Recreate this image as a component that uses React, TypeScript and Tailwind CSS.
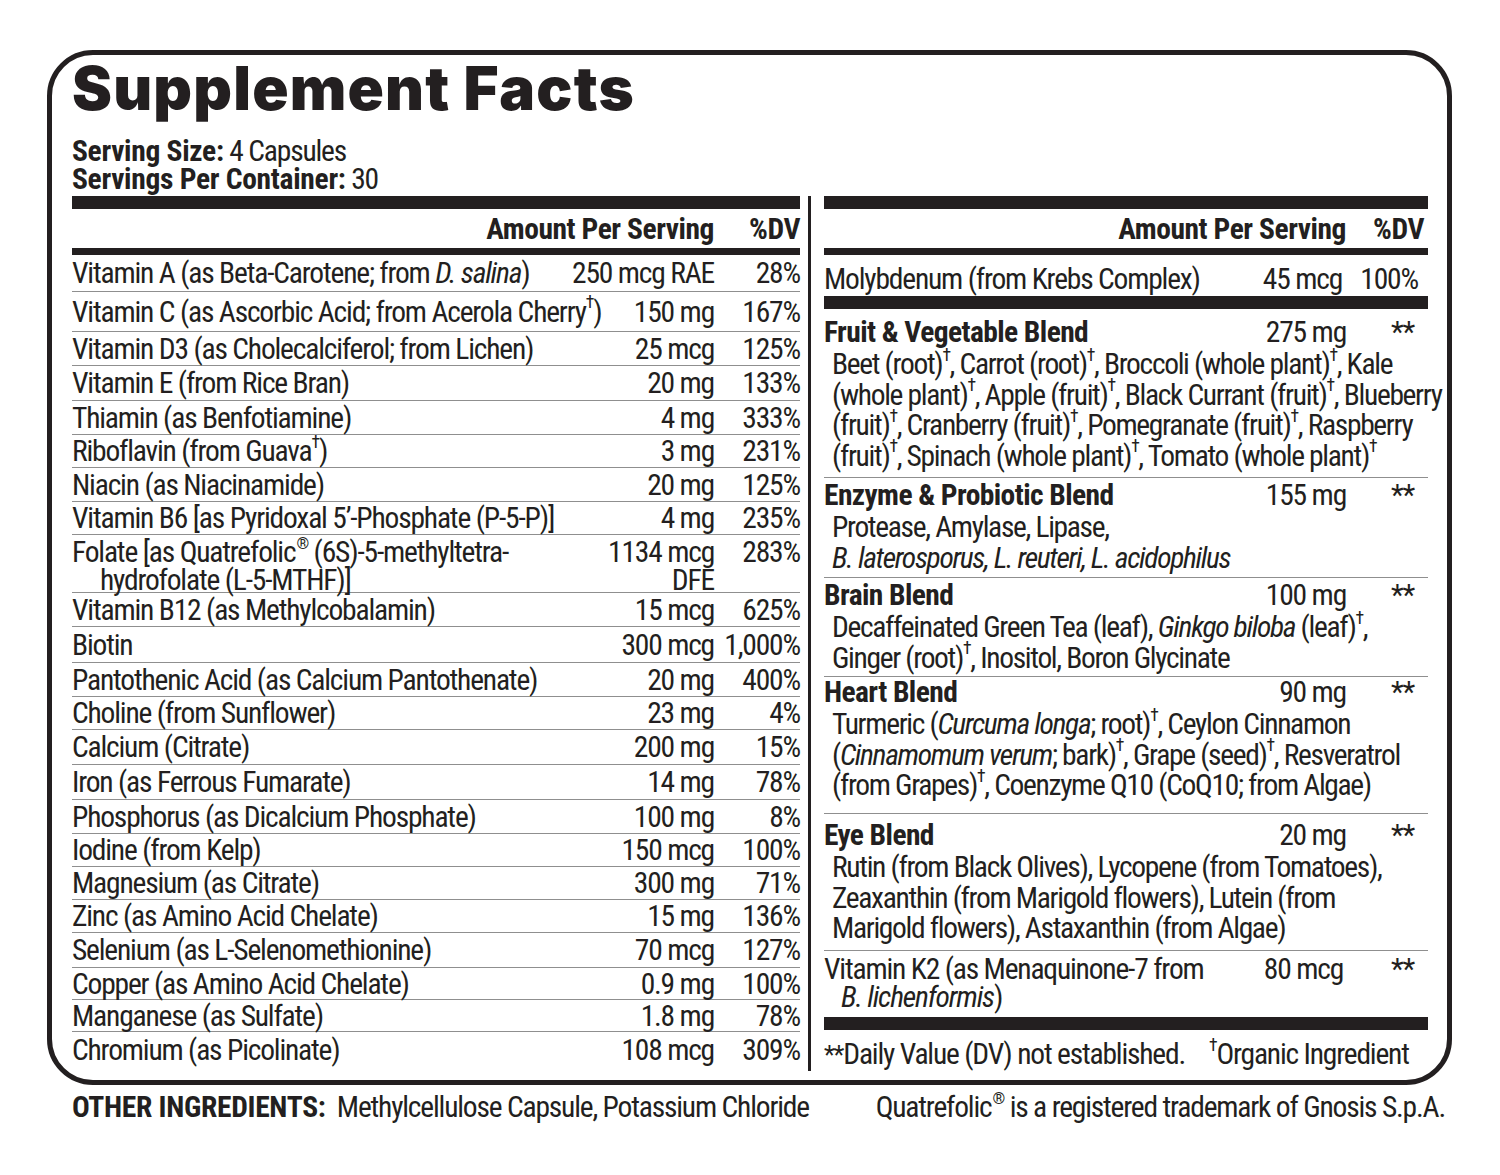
import React from 'react';

const INK = 'text-[#231f20]';

function Dag() {
  return <sup className="text-[60%] top-[-0.75em]">†</sup>;
}

function Reg() {
  return <sup className="text-[55%] top-[-0.8em] ml-[1px]">®</sup>;
}

type Nutrient = {
  name: React.ReactNode;
  amount: React.ReactNode;
  dv: string;
  h: string;
  last?: boolean;
};

const NUTRIENTS: Nutrient[] = [
  { name: <>Vitamin A (as Beta-Carotene; from <i>D. salina</i>)</>, amount: '250 mcg RAE', dv: '28%', h: 'h-[37px]' },
  { name: <>Vitamin C (as Ascorbic Acid; from Acerola Cherry<Dag />)</>, amount: '150 mg', dv: '167%', h: 'h-[40px]' },
  { name: 'Vitamin D3 (as Cholecalciferol; from Lichen)', amount: '25 mcg', dv: '125%', h: 'h-[34px]' },
  { name: 'Vitamin E (from Rice Bran)', amount: '20 mg', dv: '133%', h: 'h-[35px]' },
  { name: 'Thiamin (as Benfotiamine)', amount: '4 mg', dv: '333%', h: 'h-[34px]' },
  { name: <>Riboflavin (from Guava<Dag />)</>, amount: '3 mg', dv: '231%', h: 'h-[33px]' },
  { name: 'Niacin (as Niacinamide)', amount: '20 mg', dv: '125%', h: 'h-[34px]' },
  { name: 'Vitamin B6 [as Pyridoxal 5’-Phosphate (P-5-P)]', amount: '4 mg', dv: '235%', h: 'h-[33px]' },
  {
    name: (
      <>
        Folate [as Quatrefolic<Reg /> (6S)-5-methyltetra-
        <br />
        <span className="pl-[28px]">hydrofolate (L-5-MTHF)]</span>
      </>
    ),
    amount: (
      <>
        1134 mcg
        <br />
        DFE
      </>
    ),
    dv: '283%',
    h: 'h-[58px]',
  },
  { name: 'Vitamin B12 (as Methylcobalamin)', amount: '15 mcg', dv: '625%', h: 'h-[34px]' },
  { name: 'Biotin', amount: '300 mcg', dv: '1,000%', h: 'h-[36px]' },
  { name: 'Pantothenic Acid (as Calcium Pantothenate)', amount: '20 mg', dv: '400%', h: 'h-[34px]' },
  { name: 'Choline (from Sunflower)', amount: '23 mg', dv: '4%', h: 'h-[33px]' },
  { name: 'Calcium (Citrate)', amount: '200 mg', dv: '15%', h: 'h-[35px]' },
  { name: 'Iron (as Ferrous Fumarate)', amount: '14 mg', dv: '78%', h: 'h-[35px]' },
  { name: 'Phosphorus (as Dicalcium Phosphate)', amount: '100 mg', dv: '8%', h: 'h-[34px]' },
  { name: 'Iodine (from Kelp)', amount: '150 mcg', dv: '100%', h: 'h-[33px]' },
  { name: 'Magnesium (as Citrate)', amount: '300 mg', dv: '71%', h: 'h-[33px]' },
  { name: 'Zinc (as Amino Acid Chelate)', amount: '15 mg', dv: '136%', h: 'h-[33px]' },
  { name: 'Selenium (as L-Selenomethionine)', amount: '70 mcg', dv: '127%', h: 'h-[35px]' },
  { name: 'Copper (as Amino Acid Chelate)', amount: '0.9 mg', dv: '100%', h: 'h-[32px]' },
  { name: 'Manganese (as Sulfate)', amount: '1.8 mg', dv: '78%', h: 'h-[32px]' },
  { name: 'Chromium (as Picolinate)', amount: '108 mcg', dv: '309%', h: 'h-[36px]', last: true },
];

type Blend = {
  name: string;
  amount: string;
  h: string;
  pt: string;
  lines: React.ReactNode[];
};

const BLENDS: Blend[] = [
  {
    name: 'Fruit & Vegetable Blend',
    amount: '275 mg',
    h: 'h-[169px]',
    pt: 'pt-[8px]',
    lines: [
      <>Beet (root)<Dag />, Carrot (root)<Dag />, Broccoli (whole plant)<Dag />, Kale</>,
      <>(whole plant)<Dag />, Apple (fruit)<Dag />, Black Currant (fruit)<Dag />, Blueberry</>,
      <>(fruit)<Dag />, Cranberry (fruit)<Dag />, Pomegranate (fruit)<Dag />, Raspberry</>,
      <>(fruit)<Dag />, Spinach (whole plant)<Dag />, Tomato (whole plant)<Dag /></>,
    ],
  },
  {
    name: 'Enzyme & Probiotic Blend',
    amount: '155 mg',
    h: 'h-[100px]',
    pt: 'pt-[2px]',
    lines: [
      <>Protease, Amylase, Lipase,</>,
      <i>B. laterosporus, L. reuteri, L. acidophilus</i>,
    ],
  },
  {
    name: 'Brain Blend',
    amount: '100 mg',
    h: 'h-[99px]',
    pt: 'pt-[2px]',
    lines: [
      <>Decaffeinated Green Tea (leaf), <i>Ginkgo biloba</i> (leaf)<Dag />,</>,
      <>Ginger (root)<Dag />, Inositol, Boron Glycinate</>,
    ],
  },
  {
    name: 'Heart Blend',
    amount: '90 mg',
    h: 'h-[137px]',
    pt: 'pt-[0px]',
    lines: [
      <>Turmeric (<i>Curcuma longa</i>; root)<Dag />, Ceylon Cinnamon</>,
      <>(<i>Cinnamomum verum</i>; bark)<Dag />, Grape (seed)<Dag />, Resveratrol</>,
      <>(from Grapes)<Dag />, Coenzyme Q10 (CoQ10; from Algae)</>,
    ],
  },
  {
    name: 'Eye Blend',
    amount: '20 mg',
    h: 'h-[137px]',
    pt: 'pt-[6px]',
    lines: [
      <>Rutin (from Black Olives), Lycopene (from Tomatoes),</>,
      <>Zeaxanthin (from Marigold flowers), Lutein (from</>,
      <>Marigold flowers), Astaxanthin (from Algae)</>,
    ],
  },
];

export default function App() {
  return (
    <div
      className={`w-[1500px] h-[1175px] bg-white ${INK} font-['Roboto','Roboto_Condensed',sans-serif] [font-stretch:75%] text-[29.5px] tracking-[-0.04em]`}
    >
      <div className="ml-[47px] mt-[50px] w-[1405px] h-[1035px] border-[5px] border-[#231f20] rounded-[46px] px-[20px] pt-[3px]">
        {/* Title */}
        <h1 className="font-['Inter',sans-serif] [font-stretch:100%] font-black text-[60px] leading-[60px] tracking-[0.02em]">
          Supplement Facts
        </h1>
        <div className="mt-[19px] leading-[28px]">
          <div>
            <b className="tracking-[-0.01em]">Serving Size:</b> 4 Capsules
          </div>
          <div>
            <b className="tracking-[-0.01em]">Servings Per Container:</b> 30
          </div>
        </div>

        {/* Two columns */}
        <div className="flex mt-[3px]">
          {/* Left column */}
          <div className="w-[728px] shrink-0">
            <div className="h-[13px] bg-[#231f20]" />
            <div className="h-[39px] flex items-center justify-end font-bold tracking-[-0.015em] leading-[30px]">
              <span>Amount Per Serving</span>
              <span className="w-[86px] text-right">%DV</span>
            </div>
            <div className="h-[7px] bg-[#231f20]" />
            {NUTRIENTS.map((n, i) => (
              <div
                key={i}
                className={`${n.h} flex leading-[28px] whitespace-nowrap ${
                  i === 8 ? 'items-start pt-[3px]' : 'items-center'
                } ${n.last ? '' : 'border-b border-[#8f8f8f]'}`}
              >
                <div className="flex-1 min-w-0">{n.name}</div>
                <div className="shrink-0 text-right">{n.amount}</div>
                <div className="w-[86px] shrink-0 text-right">{n.dv}</div>
              </div>
            ))}
          </div>

          {/* Right column */}
          <div className="w-[620px] shrink-0 ml-[8px] border-l-[3px] border-[#231f20] pl-[13px]">
            <div className="h-[13px] bg-[#231f20]" />
            <div className="h-[39px] flex items-center justify-end font-bold tracking-[-0.015em] leading-[30px]">
              <span>Amount Per Serving</span>
              <span className="w-[82px] text-right pr-[4px]">%DV</span>
            </div>
            <div className="h-[7px] bg-[#231f20]" />
            <div className="h-[41px] pt-[6px] flex items-center leading-[30px] whitespace-nowrap">
              <div className="flex-1">Molybdenum (from Krebs Complex)</div>
              <div className="shrink-0 text-right pr-[4px]">45 mcg</div>
              <div className="w-[82px] shrink-0 text-right pr-[10px]">100%</div>
            </div>
            <div className="h-[13px] bg-[#231f20]" />

            {BLENDS.map((b) => (
              <div key={b.name} className={`${b.h} ${b.pt} border-b border-[#8f8f8f] whitespace-nowrap`}>
                <div className="flex leading-[31px]">
                  <div className="flex-1 font-bold tracking-[-0.02em]">{b.name}</div>
                  <div className="shrink-0 text-right">{b.amount}</div>
                  <div className="w-[82px] shrink-0 pl-[45px]">**</div>
                </div>
                <div className="pl-[8px] mt-[1px] leading-[30.5px] tracking-[-0.045em]">
                  {b.lines.map((l, i) => (
                    <div key={i}>{l}</div>
                  ))}
                </div>
              </div>
            ))}

            <div className="h-[66px] pt-[4px] flex items-start leading-[28px] whitespace-nowrap">
              <div className="flex-1">
                Vitamin K2 (as Menaquinone-7 from
                <br />
                <span className="pl-[17px]">
                  <i>B. lichenformis</i>)
                </span>
              </div>
              <div className="shrink-0 text-right pr-[3px]">80 mcg</div>
              <div className="w-[82px] shrink-0 pl-[45px]">**</div>
            </div>
            <div className="h-[13px] bg-[#231f20]" />
            <div className="pt-[9px] leading-[30px] whitespace-nowrap flex">
              <span>
                <span className="text-[85%]">**</span>Daily Value (DV) not established.
              </span>
              <span className="ml-[24px]">
                <Dag />
                Organic Ingredient
              </span>
            </div>
          </div>
        </div>
      </div>

      {/* Below the panel */}
      <div className="flex justify-between pl-[72px] pr-[55px] mt-[7px] leading-[30px] whitespace-nowrap">
        <div>
          <b className="tracking-[-0.01em]">OTHER INGREDIENTS:</b>&nbsp; Methylcellulose Capsule, Potassium Chloride
        </div>
        <div>
          Quatrefolic<Reg /> is a registered trademark of Gnosis S.p.A.
        </div>
      </div>
    </div>
  );
}
